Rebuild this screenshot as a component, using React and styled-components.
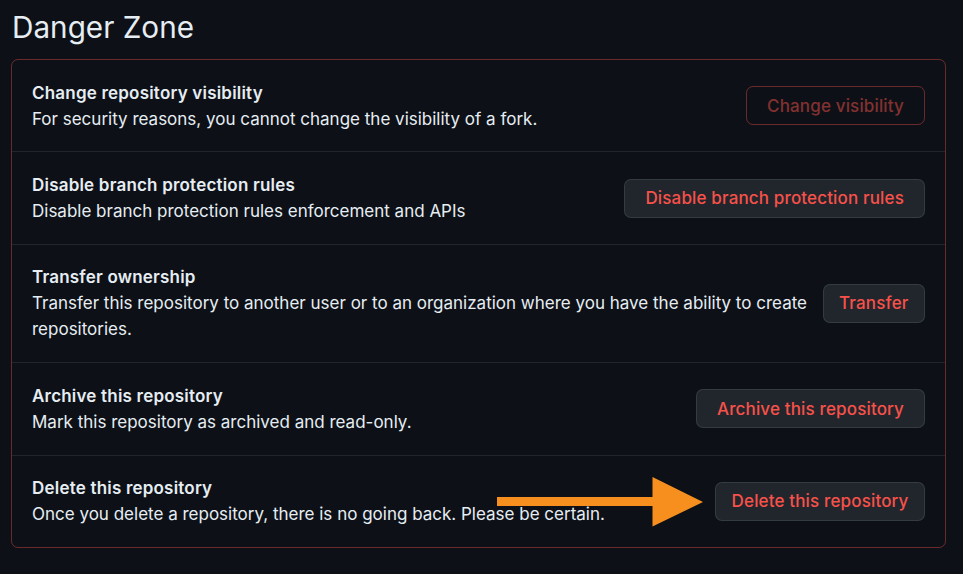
import React from "react";
import styled, { createGlobalStyle } from "styled-components";

const GlobalStyle = createGlobalStyle`
  html, body {
    margin: 0;
    padding: 0;
    background: #0d1117;
  }
  body {
    font-family: Inter, "Noto Sans", "Liberation Sans", sans-serif;
    color: #e6edf3;
    -webkit-font-smoothing: antialiased;
  }
  * { box-sizing: border-box; }
`;

const Page = styled.div`
  padding: 9px 17px 20px 11px;
  min-height: 574px;
  background: #0d1117;
`;

const Heading = styled.h2`
  margin: 0 0 14px 1px;
  font-size: 29.7px;
  line-height: 36px;
  font-weight: 400;
  color: #e6edf3;
`;

const DangerBox = styled.ul`
  list-style: none;
  margin: 0;
  padding: 0;
  border: 1px solid rgba(248, 81, 73, 0.4);
  border-radius: 7px;
`;

const Row = styled.li`
  position: relative;
  display: flex;
  align-items: center;
  gap: 8px;
  padding: 19.7px 20px;
  & + & {
    border-top: 1px solid #21262d;
  }
`;

const Info = styled.div`
  flex: 1 1 auto;
  min-width: 0;
  font-size: 17px;
  line-height: 26px;
`;

const Title = styled.strong`
  display: block;
  font-weight: 600;
  letter-spacing: 0.2px;
  color: #e6edf3;
`;

const Description = styled.p`
  margin: 0;
  font-weight: 400;
  color: #e6edf3;
`;

const DangerButton = styled.button`
  flex: 0 0 auto;
  height: 39px;
  padding: 0 ${(p) => (p.$compact ? "15.5px" : "20px")};
  border-radius: 7px;
  font-family: inherit;
  font-size: 17px;
  font-weight: 500;
  letter-spacing: 0.15px;
  white-space: nowrap;
  cursor: ${(p) => (p.disabled ? "not-allowed" : "pointer")};
  background: ${(p) => (p.disabled ? "transparent" : "#21262d")};
  border: 1px solid
    ${(p) => (p.disabled ? "rgba(248, 81, 73, 0.4)" : "rgba(240, 246, 252, 0.1)")};
  color: ${(p) => (p.disabled ? "rgba(248, 81, 73, 0.5)" : "#f85149")};
`;

const Arrow = styled.svg`
  position: absolute;
  left: 485px;
  top: 21px;
  pointer-events: none;
`;

const rows = [
  {
    title: "Change repository visibility",
    desc: "For security reasons, you cannot change the visibility of a fork.",
    button: "Change visibility",
    disabled: true,
  },
  {
    title: "Disable branch protection rules",
    desc: "Disable branch protection rules enforcement and APIs",
    button: "Disable branch protection rules",
  },
  {
    title: "Transfer ownership",
    desc: "Transfer this repository to another user or to an organization where you have the ability to create repositories.",
    button: "Transfer",
    compact: true,
  },
  {
    title: "Archive this repository",
    desc: "Mark this repository as archived and read-only.",
    button: "Archive this repository",
  },
  {
    title: "Delete this repository",
    desc: "Once you delete a repository, there is no going back. Please be certain.",
    button: "Delete this repository",
    compact: true,
    arrow: true,
  },
];

export default function App() {
  return (
    <>
      <GlobalStyle />
      <Page>
        <Heading>Danger Zone</Heading>
        <DangerBox>
          {rows.map((r) => (
            <Row key={r.title}>
              <Info>
                <Title>{r.title}</Title>
                <Description>{r.desc}</Description>
              </Info>
              <DangerButton disabled={r.disabled} $compact={r.compact}>
                {r.button}
              </DangerButton>
              {r.arrow && (
                <Arrow width="207" height="50" viewBox="0 0 207 50">
                  <rect x="0" y="20" width="158" height="9" fill="#f78f1f" />
                  <polygon points="155.5,0 206,25 155.5,49.5" fill="#f78f1f" />
                </Arrow>
              )}
            </Row>
          ))}
        </DangerBox>
      </Page>
    </>
  );
}
